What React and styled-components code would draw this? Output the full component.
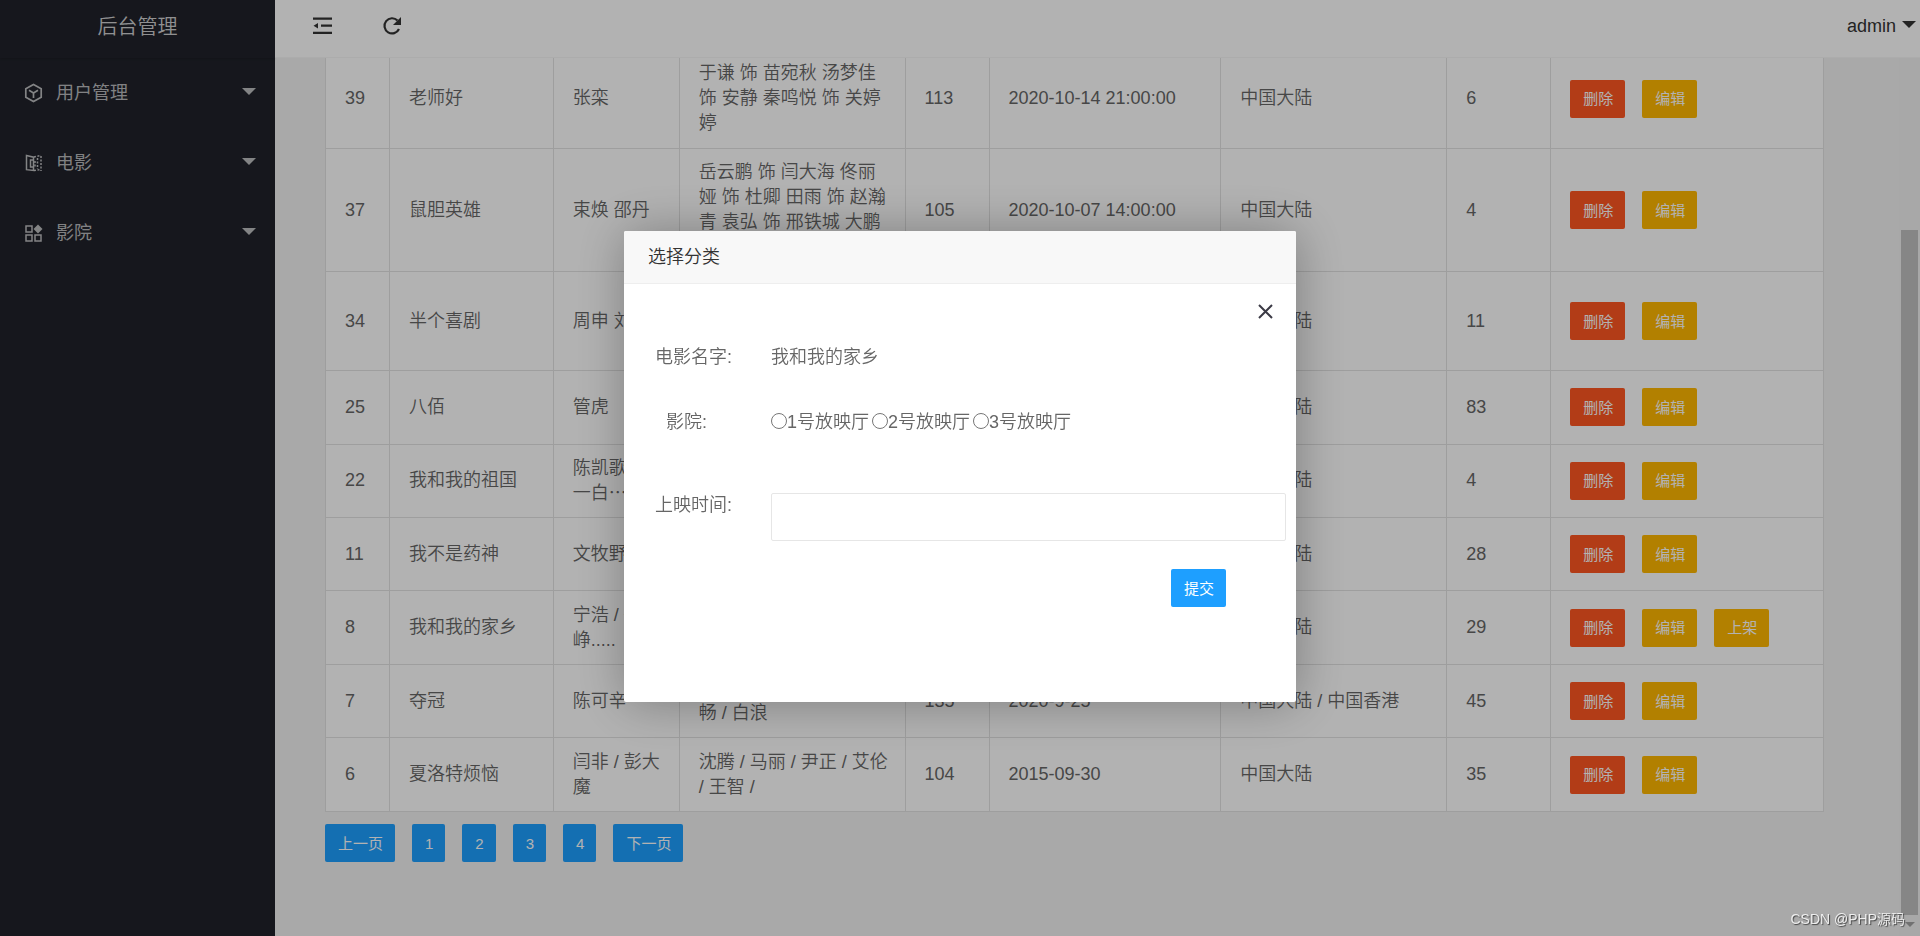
import React from 'react'
import styled, { createGlobalStyle } from 'styled-components'

const GlobalStyle = createGlobalStyle`
    *, *::before, *::after { box-sizing: border-box; }
    html, body, #root { height: 100%; margin: 0; }
    body {
        overflow: hidden;
        background: #f2f2f2;
        color: #666;
        font: 350 18px/25px 'Liberation Sans', 'Noto Sans CJK SC', sans-serif;
    }
    button, input { font: inherit; }
`;

const Page = styled.div`
    display: flex;
    height: 100%;
`;

const Side = styled.nav`
    flex: none;
    width: 275px;
    background: #20222a;
    color: rgba(255, 255, 255, 0.7);
    font-weight: 400;
`;

const Logo = styled.h1`
    margin: 0;
    height: 58px;
    padding-top: 15px;
    font-size: 20px;
    font-weight: 350;
    text-align: center;
    color: rgba(255, 255, 255, 0.8);
    box-shadow: 0 1px 2px rgba(0, 0, 0, 0.15);
`;

const MenuItem = styled.a`
    display: flex;
    align-items: center;
    height: 70px;
    padding: 0 19px 0 24px;
    color: inherit;
    text-decoration: none;
`;

const MenuText = styled.span`
    flex: 1;
    margin-left: 13px;
`;

const Caret = styled.span`
    margin-bottom: 3px;
    border: 7px solid transparent;
    border-top-color: currentColor;
    border-bottom-width: 0;
`;

const Main = styled.div`
    flex: 1;
    min-width: 0;
    display: flex;
    flex-direction: column;
`;

const Header = styled.header`
    flex: none;
    display: flex;
    align-items: center;
    gap: 50px;
    height: 58px;
    padding: 0 4px 5px 36px;
    background: #fff;
    border-bottom: 1px solid #f6f6f6;
    color: #333;
`;

const IconButton = styled.button`
    display: flex;
    padding: 0;
    border: 0;
    background: none;
    color: #333;
`;

const User = styled.a`
    display: flex;
    align-items: center;
    gap: 6px;
    margin-left: auto;
    color: #333;
    text-decoration: none;
`;

const Body = styled.div`
    flex: 1;
    min-height: 0;
    display: flex;
`;

// the list stays scrolled to its end
const Content = styled.main`
    flex: 1;
    min-width: 0;
    display: flex;
    flex-direction: column;
    justify-content: flex-end;
    overflow: hidden;
    padding: 0 75px 74px 50px;
`;

const Table = styled.table`
    flex: none;
    width: 100%;
    height: 763px;
    border-collapse: collapse;
    table-layout: fixed;
    background: #fff;
`;

const Cell = styled.td`
    padding: 11px 8px 11px 19px;
    border: 1px solid #e2e2e2;
    white-space: pre-line;
`;

const Buttons = styled.div`
    display: flex;
    gap: 17px;
    flex: none;
`;

const Pager = styled(Buttons)`
    margin-top: 12px;
`;

const colors = {
    normal: '#1e9fff',
    danger: '#ff5722',
    warm: '#ffb800',
};

const Button = styled.button`
    height: 38px;
    padding: 0 12px 0 13px;
    border: 0;
    border-radius: 2px;
    background: ${({ $kind }) => colors[$kind]};
    color: #fff;
    font-size: 15px;
    font-weight: 400;
    white-space: nowrap;
`;

const ScrollBar = styled.div`
    flex: none;
    display: flex;
    flex-direction: column;
    align-items: center;
    width: 21px;
    padding: 172px 2px 6px;
    background: #f1f1f1;
    color: #a3a3a3;
`;

const Thumb = styled.div`
    flex: 1;
    width: 17px;
    margin-bottom: 7px;
    background: #c1c1c1;
`;

const ScrollArrow = styled(Caret)`
    border-width: 5px 5px 0;
`;

const Shade = styled.div`
    position: fixed;
    inset: 0;
    display: flex;
    align-items: center;
    justify-content: center;
    padding-bottom: 3px;
    background: rgba(0, 0, 0, 0.3);
`;

const Dialog = styled.section`
    width: 35%;
    min-height: 471px;
    border-radius: 2px;
    background: #fff;
    box-shadow: 1px 1px 50px rgba(0, 0, 0, 0.3);
`;

const DialogTitle = styled.h2`
    margin: 0;
    height: 53px;
    padding: 14px 24px 13px;
    border-bottom: 1px solid #eee;
    border-radius: 2px 2px 0 0;
    background: #f8f8f8;
    color: #333;
    font-size: 18px;
    font-weight: 350;
`;

const Form = styled.form`
    display: flex;
    flex-direction: column;
    padding: 19px 10px 0 20px;
`;

const Close = styled(IconButton)`
    align-self: flex-end;
    margin-right: 12px;
    color: #3b3a45;
`;

const Field = styled.div`
    display: flex;
    margin-top: ${({ $gap }) => $gap}px;
`;

const Label = styled.label`
    flex: none;
    width: 127px;
    padding-left: ${({ $indent }) => ($indent ? 22 : 11)}px;
`;

const Radios = styled.div`
    display: flex;
    gap: 3px;
`;

const RadioLabel = styled.label`
    display: flex;
    align-items: center;
`;

const Radio = styled.input`
    width: 16px;
    height: 16px;
    margin: 0 0 3px;
`;

const TimeInput = styled.input`
    flex: 1;
    min-width: 0;
    height: 48px;
    padding: 0 12px;
    border: 1px solid #e6e6e6;
    border-radius: 2px;
    background: #fff;
`;

const Submit = styled(Button)`
    align-self: flex-end;
    margin: 28px 60px 0 0;
`;

const Watermark = styled.div`
    position: fixed;
    right: 15px;
    bottom: 5px;
    color: rgba(255, 255, 255, 0.85);
    font-size: 14px;
    line-height: 24px;
    text-shadow: 1px 1px 1px #444;
`;

const UserIcon = () => (
    <svg width="19" height="20" viewBox="0 0 19 20" fill="none" stroke="currentColor" strokeWidth="1.7">
        <path d="M9.500 1.500L17.200 5.700V14.300L9.500 18.500L1.800 14.300V5.700Z" />
        <path d="M5 7.300L9.500 10L14 7.300M9.500 10V15" />
    </svg>
)

const FilmIcon = () => (
    <svg width="19" height="20" viewBox="0 0 19 20" fill="none" stroke="currentColor" strokeWidth="1.500">
        <path d="M2.500 2.500L9.500 4.200V17.500L2.500 16.700ZM9.500 7H6.500V14H9.500" />
        <path d="M10 4L17 2.500M10 17.500L17 16.500M17 3V18M13.500 5V16M11 8V15" strokeDasharray="2 1.500" />
    </svg>
)

const CinemaIcon = () => (
    <svg width="19" height="20" viewBox="0 0 19 20" fill="none" stroke="currentColor" strokeWidth="1.500">
        <path d="M2 3H8V9H2ZM2 12H8V18H2ZM11 12H17V18H11Z" />
        <path d="M14 1.500L18.500 6L14 10.500L9.500 6Z" fill="currentColor" stroke="none" />
    </svg>
)

const FoldIcon = () => (
    <svg width="21" height="20" viewBox="0 0 21 20" fill="currentColor">
        <path d="M2 1.500H21V3.700H2ZM10 8.500H21V10.700H10ZM2 15.700H21V18H2ZM2.500 9.700L7 7V12.400Z" />
    </svg>
)

const RefreshIcon = () => (
    <svg width="20" height="20" viewBox="0 0 20 20" fill="none">
        <path d="M17 13A7.600 7.600 0 1 1 15.500 4.500" stroke="currentColor" strokeWidth="2.200" />
        <path d="M19 1V9H11Z" fill="currentColor" />
    </svg>
)

const CloseIcon = () => (
    <svg width="17" height="17" viewBox="0 0 17 17" stroke="currentColor" strokeWidth="2">
        <path d="M2 2L15 15M15 2L2 15" />
    </svg>
)

const menu = [
    { text: '用户管理', Icon: UserIcon },
    { text: '电影', Icon: FilmIcon },
    { text: '影院', Icon: CinemaIcon },
]

const widths = [64, 164, 126, 226, 84, 232, 226, 104, 273]

const movies = [
    [39, '老师好', '张栾', '于谦 饰 苗宛秋 汤梦佳\n饰 安静 秦鸣悦 饰 关婷\n婷', 113, '2020-10-14 21:00:00', '中国大陆', 6],
    [37, '鼠胆英雄', '束焕 邵丹', '岳云鹏 饰 闫大海 佟丽\n娅 饰 杜卿 田雨 饰 赵瀚\n青 袁弘 饰 邢铁城 大鹏\n饰', 105, '2020-10-07 14:00:00', '中国大陆', 4],
    [34, '半个喜剧', '周申 刘露', '任素汐 饰 莫默\n吴昱翰 饰 郑多多\n刘迅 饰 孙同', 111, '2020-10-07 14:00:00', '中国大陆', 11],
    [25, '八佰', '管虎', '王千源 / 张译\n/ 姜武', 147, '2020-8-21', '中国大陆', 83],
    [22, '我和我的祖国', '陈凯歌 张\n一白⋯', '黄渤 / 张译\n/ 韩昊霖', 158, '2019-09-30', '中国大陆', 4],
    [11, '我不是药神', '文牧野', '徐峥 / 王传君\n/ 周一围', 117, '2018-07-05', '中国大陆', 28],
    [8, '我和我的家乡', '宁浩 / 徐\n峥.....', '葛优 / 黄渤\n/ 范伟', 153, '2020-10-01', '中国大陆', 29],
    [7, '夺冠', '陈可辛', '巩俐 / 黄渤 / 吴刚 / 彭昱\n畅 / 白浪', 135, '2020-9-25', '中国大陆 / 中国香港', 45],
    [6, '夏洛特烦恼', '闫非 / 彭大\n魔', '沈腾 / 马丽 / 尹正 / 艾伦\n/ 王智 /', 104, '2015-09-30', '中国大陆', 35],
]

const App = () => {
    return (
        <>
            <GlobalStyle />
            <Page>
                <Side>
                    <Logo>后台管理</Logo>
                    {menu.map(({ text, Icon }) => (
                        <MenuItem href="#" key={text}>
                            <Icon />
                            <MenuText>{text}</MenuText>
                            <Caret />
                        </MenuItem>
                    ))}
                </Side>
                <Main>
                    <Header>
                        <IconButton aria-label="收起菜单"><FoldIcon /></IconButton>
                        <IconButton aria-label="刷新"><RefreshIcon /></IconButton>
                        <User href="#">admin <Caret /></User>
                    </Header>
                    <Body>
                        <Content>
                            <Table>
                                <colgroup>
                                    {widths.map((w, i) => <col key={i} style={{ width: `${w / 14.99}%` }} />)}
                                </colgroup>
                                <tbody>
                                    {movies.map((movie) => (
                                        <tr key={movie[0]}>
                                            {movie.map((value, i) => <Cell key={i}>{value}</Cell>)}
                                            <Cell>
                                                <Buttons>
                                                    <Button $kind="danger">删除</Button>
                                                    <Button $kind="warm">编辑</Button>
                                                    {movie[0] === 8 && <Button $kind="warm">上架</Button>}
                                                </Buttons>
                                            </Cell>
                                        </tr>
                                    ))}
                                </tbody>
                            </Table>
                            <Pager>
                                {['上一页', 1, 2, 3, 4, '下一页'].map((page) => (
                                    <Button $kind="normal" key={page}>{page}</Button>
                                ))}
                            </Pager>
                        </Content>
                        <ScrollBar>
                            <Thumb />
                            <ScrollArrow />
                        </ScrollBar>
                    </Body>
                </Main>
            </Page>
            <Shade>
                <Dialog role="dialog" aria-labelledby="dialog-title">
                    <DialogTitle id="dialog-title">选择分类</DialogTitle>
                    <Form>
                        <Close type="button" aria-label="关闭"><CloseIcon /></Close>
                        <Field $gap={25}>
                            <Label as="span">电影名字:</Label>
                            <span>我和我的家乡</span>
                        </Field>
                        <Field $gap={40}>
                            <Label as="span" $indent>影院:</Label>
                            <Radios>
                                {[1, 2, 3].map((n) => (
                                    <RadioLabel key={n}>
                                        <Radio type="radio" name="hall" value={n} />
                                        {n}号放映厅
                                    </RadioLabel>
                                ))}
                            </Radios>
                        </Field>
                        <Field $gap={58}>
                            <Label htmlFor="time">上映时间:</Label>
                            <TimeInput id="time" type="text" />
                        </Field>
                        <Submit type="button" $kind="normal">提交</Submit>
                    </Form>
                </Dialog>
            </Shade>
            <Watermark>CSDN @PHP源码</Watermark>
        </>
    )
}

export default App
